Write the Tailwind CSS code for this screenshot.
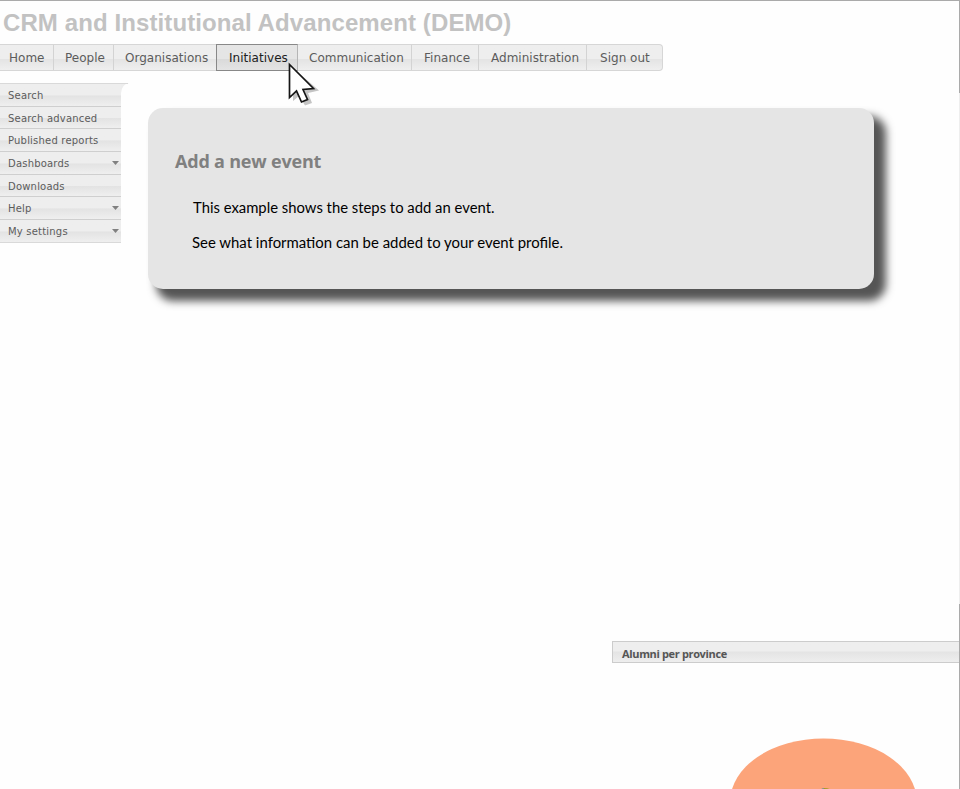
<!DOCTYPE html>
<html lang="en">
<head>
<meta charset="utf-8">
<title>CRM and Institutional Advancement (DEMO)</title>
<script src="https://cdn.jsdelivr.net/npm/@tailwindcss/browser@4"></script>
</head>
<body class="bg-[#fefefe]">
<div class="relative flex h-[789px] w-[960px] flex-col overflow-hidden border-t border-[#aaaaaa] font-['DejaVu_Sans',sans-serif]">
  <header class="h-[43px] shrink-0 pl-[3px] pt-[7px]">
    <h1 class="whitespace-nowrap font-['Liberation_Sans',sans-serif] text-[24px] font-bold leading-[30px] tracking-[0.1px] text-[#c2c2c2]">CRM and Institutional Advancement (DEMO)</h1>
  </header>
  <nav class="flex h-[27px] w-[663px] shrink-0 whitespace-nowrap rounded-r-[4px] border-y border-r border-[#d6d6d6] bg-linear-to-b from-[#eeeeee] from-55% via-[#e4e4e4] via-58% to-[#efefef] text-[12px] leading-[26px] tracking-[0.02px] text-[#5c5c5c]">
    <a class="w-[54px] border-r border-[#d3d3d3] pl-[9px]">Home</a>
    <a class="w-[60px] border-r border-[#d3d3d3] pl-[11px]">People</a>
    <a class="w-[102px] pl-[11px]">Organisations</a>
    <a class="-my-px w-[82px] border border-[#888888] border-r-[#b5b5b5] bg-linear-to-b from-[#e5e5e5] from-55% via-[#dadada] via-58% to-[#e4e4e4] pl-[12px] text-[#202020]">Initiatives</a>
    <a class="w-[114px] border-r border-[#d3d3d3] pl-[11px]">Communication</a>
    <a class="w-[67px] border-r border-[#d3d3d3] pl-[12px]">Finance</a>
    <a class="w-[108px] border-r border-[#d3d3d3] pl-[12px]">Administration</a>
    <a class="pl-[13px]">Sign out</a>
  </nav>
  <div class="flex h-[570px] shrink-0 items-start pt-[12px]">
    <aside class="relative w-[121px] shrink-0 border-t border-[#d9d9d9] text-[10px] leading-[24px] tracking-[0.2px] text-[#5c5c5c]">
      <div class="h-[22.7px] border-b border-[#cfcfcf] bg-linear-to-b from-[#eeeeee] from-50% via-[#e3e3e3] via-54% to-[#efefef] pl-[8px]">Search</div>
      <div class="h-[22.7px] border-b border-[#cfcfcf] bg-linear-to-b from-[#eeeeee] from-50% via-[#e3e3e3] via-54% to-[#efefef] pl-[8px]">Search advanced</div>
      <div class="h-[22.7px] border-b border-[#cfcfcf] bg-linear-to-b from-[#eeeeee] from-50% via-[#e3e3e3] via-54% to-[#efefef] pl-[8px]">Published reports</div>
      <div class="flex h-[22.7px] justify-between border-b border-[#cfcfcf] bg-linear-to-b from-[#eeeeee] from-50% via-[#e3e3e3] via-54% to-[#efefef] pl-[8px] pr-[2px]">Dashboards<svg class="mt-[9px] h-[4px] w-[7px]" viewBox="0 0 7 4"><path d="M0 0h7L3.5 4z" fill="#808080"/></svg></div>
      <div class="h-[22.7px] border-b border-[#cfcfcf] bg-linear-to-b from-[#eeeeee] from-50% via-[#e3e3e3] via-54% to-[#efefef] pl-[8px]">Downloads</div>
      <div class="flex h-[22.7px] justify-between border-b border-[#cfcfcf] bg-linear-to-b from-[#eeeeee] from-50% via-[#e3e3e3] via-54% to-[#efefef] pl-[8px] pr-[2px]">Help<svg class="mt-[9px] h-[4px] w-[7px]" viewBox="0 0 7 4"><path d="M0 0h7L3.5 4z" fill="#808080"/></svg></div>
      <div class="flex h-[22.7px] justify-between border-b border-[#d9d9d9] bg-linear-to-b from-[#eeeeee] from-50% via-[#e3e3e3] via-54% to-[#efefef] pl-[8px] pr-[2px]">My settings<svg class="mt-[9px] h-[4px] w-[7px]" viewBox="0 0 7 4"><path d="M0 0h7L3.5 4z" fill="#808080"/></svg></div>
      <svg class="absolute -top-px left-[121px] h-[10px] w-[8px]" viewBox="0 0 8 10"><path d="M0 0H8Q1 1 0 10Z" fill="#ededed"/><path d="M0 .5H7" stroke="#d9d9d9"/></svg>
    </aside>
    <main class="ml-[27px] mt-[25px] h-[181px] w-[726px] whitespace-nowrap rounded-[15px] bg-[#e5e5e5] pl-[27px] pt-[40px] font-['Lato',sans-serif] shadow-[10px_10px_9px_2px_#555555]">
      <h2 class="font-['Open_Sans',sans-serif] text-[18px] font-bold leading-[26px] tracking-[-0.2px] text-[#808080]">Add a new event</h2>
      <p class="mt-[21px] pl-[18px] text-[14.83px] leading-[24px] text-black">This example shows the steps to add an event.</p>
      <p class="mt-[11px] pl-[17px] text-[14.93px] leading-[24px] text-black">See what information can be added to your event profile.</p>
    </main>
  </div>
  <section class="ml-[612px] shrink-0">
    <h3 class="h-[22px] whitespace-nowrap border-y border-l border-[#cccccc] bg-linear-to-b from-[#eeeeee] from-45% via-[#e4e4e4] via-50% to-[#eeeeee] pl-[9px] font-['Open_Sans',sans-serif] text-[11px] font-bold leading-[24px] tracking-[-0.35px] text-[#555555]">Alumni per province</h3>
    <svg class="ml-[118px] mt-[75px] h-[52px] w-[190px]" viewBox="0 0 190 52"><ellipse cx="93.5" cy="63.5" rx="93.3" ry="63" fill="#fca47a"/><path d="M91 52q0-2 4-2v2z" fill="#668d99"/><path d="M94 50q5 0 7 2h-7z" fill="#a69c20"/></svg>
  </section>
  <div class="absolute right-0 top-0 h-[92px] w-px bg-[#aaaaaa]"></div>
  <div class="absolute right-0 top-[92px] h-[512px] w-px bg-[#eeeeee]"></div>
  <div class="absolute bottom-0 right-0 h-[185px] w-px bg-[#aaaaaa]"></div>
  <svg class="absolute left-[287px] top-[60px] h-[46px] w-[36px]" viewBox="0 0 36 46">
    <path d="M6 7V40L12 35L18 44.500L25 42L21 32L32 29.500Z" fill="#c4c4c4"/>
    <path d="M2.500 3.500V36.500L9.500 30L14.500 41L20.500 38.500L16 28.500L26.500 27.500Z" fill="#fff" stroke="#151515" stroke-width="1.7"/>
  </svg>
</div>
</body>
</html>
